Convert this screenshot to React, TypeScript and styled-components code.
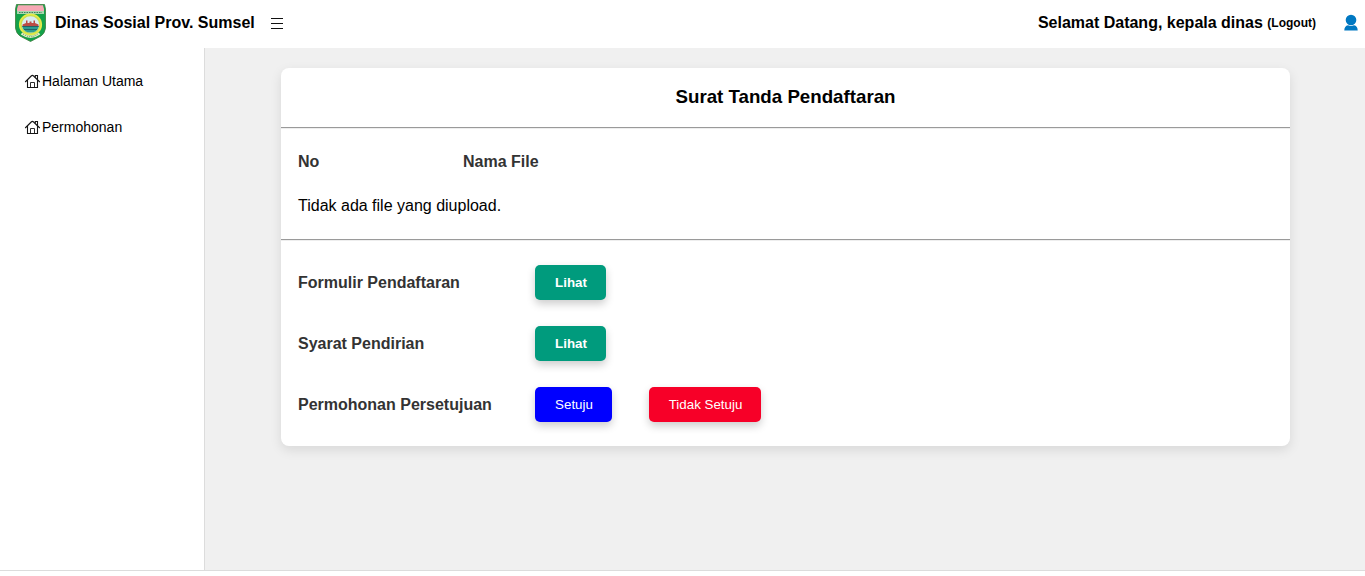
import React from "react";
import styled, { createGlobalStyle } from "styled-components";

const GlobalStyle = createGlobalStyle`
  * { box-sizing: border-box; }
  body {
    margin: 0;
    background: #fff;
    color: #000;
    font-family: "Liberation Sans", Arial, sans-serif;
    font-size: 16px;
    overflow: hidden;
  }
`;

const Page = styled.div`
  height: 571px;
  display: flex;
  flex-direction: column;
  border-bottom: 1px solid #dcdcdc;
`;

const Header = styled.header`
  height: 48px;
  flex: none;
  display: flex;
  align-items: flex-start;
  justify-content: space-between;
  padding: 0 6px 0 15px;
  background: #fff;
`;

const Group = styled.div`
  display: flex;
  align-items: flex-start;
`;

const Brand = styled.strong`
  margin: 14px 0 0 9px;
  width: 200px;
  line-height: 18px;
  white-space: nowrap;
`;

const MenuButton = styled.span`
  display: flex;
  margin: 18px 0 0 16px;
`;

const Welcome = styled.strong`
  margin-top: 14px;
  line-height: 18px;
  white-space: nowrap;
`;

const Logout = styled.strong`
  margin: 16px 28px 0 4.5px;
  font-size: 12px;
  line-height: 14px;
`;

const Avatar = styled.span`
  display: flex;
  margin-top: 14px;
`;

const Body = styled.div`
  flex: 1;
  display: flex;
`;

const Sidebar = styled.nav`
  width: 205px;
  flex: none;
  display: flex;
  flex-direction: column;
  gap: 30px;
  padding: 25px 24px;
  border-right: 1px solid #dcdcdc;
`;

const NavItem = styled.div`
  display: flex;
  align-items: center;
  gap: 1px;
  height: 16px;
  font-size: 14px;
  line-height: 16px;
`;

const Main = styled.main`
  flex: 1;
  padding: 20px 75px 0 76px;
  background: #f0f0f0;
`;

const Card = styled.section`
  height: 378px;
  background: #fff;
  border-radius: 8px;
  box-shadow: 0 4px 12px rgba(0, 0, 0, 0.1);
`;

const Title = styled.h1`
  margin: 0;
  height: 59px;
  font-size: 18.72px;
  line-height: 58px;
  text-align: center;
`;

const Rule = styled.div`
  height: 2px;
  border-top: 1px solid #9a9a9a;
  border-bottom: 1px solid #eee;
`;

const Files = styled.div`
  height: 110px;
  padding: 24px 17px 0;
  line-height: 18px;
`;

const Columns = styled.div`
  display: grid;
  grid-template-columns: 165px 1fr;
  margin-bottom: 26px;
  color: #333;
  font-weight: bold;
`;

const Actions = styled.div`
  display: flex;
  flex-direction: column;
  gap: 26px;
  padding: 24px 17px 0;
`;

const Row = styled.div`
  display: flex;
  align-items: center;
  height: 35px;
`;

const Label = styled.strong`
  width: 237px;
  color: #333;
`;

const Button = styled.button<{ $color: string; $bold?: boolean; $width: number }>`
  width: ${(p) => p.$width}px;
  height: 35px;
  margin-right: 37px;
  padding: 0 0 0 1px;
  border: 0;
  border-radius: 5px;
  background: ${(p) => p.$color};
  color: #fff;
  font-family: inherit;
  font-size: 13.333px;
  font-weight: ${(p) => (p.$bold ? "bold" : "normal")};
  box-shadow: 0 4px 8px rgba(0, 0, 0, 0.2);
`;

const Crest = () => (
  <svg width="31" height="42" viewBox="0 -4 31 42">
    <path d="M1.5 .5H29.5L30.5 5V24Q30 29 26 32L15.5 37.5L5 32Q1 29 .5 24V5Z" fill="#13a24a" stroke="#3d7a3c" strokeWidth=".8" />
    <path d="M2 5L3 1.2H28L29 5V7H2Z" fill="#f7a8b4" />
    <path d="M2 7H29V10H2Z" fill="#a9d7ae" />
    <path d="M4 8.5H27" stroke="#43805a" strokeDasharray="1.5 1" />
    <ellipse cx="15.5" cy="20.5" rx="10.8" ry="10.3" fill="#c9e04e" stroke="#e5ea4a" strokeWidth="1.6" />
    <ellipse cx="15.5" cy="20.5" rx="8.8" ry="8.2" fill="#d9ecef" />
    <path d="M7 22H24Q22.5 28.5 15.5 28.6Q8.5 28.5 7 22Z" fill="#2b9c92" />
    <path d="M7.5 20.5L11 19V16.5H12.5V19H14.5V17.5H16.5V19H18.5V16.5H20V19L23.5 20.5V22.5H7.5Z" fill="#bd4b45" />
    <path d="M7.5 22.5H23.5M9 25.5H22" stroke="#236264" />
    <path d="M6.5 29.5Q15.5 36 24.5 29.5" fill="none" stroke="#e0efc5" strokeWidth="2.5" />
    <path d="M8 30Q15.5 35.5 23 30" fill="none" stroke="#668d55" strokeWidth=".9" strokeDasharray="1.2 1" />
  </svg>
);

const House = () => (
  <svg width="17" height="16" viewBox="0 0 17 16" fill="none" stroke="#151515" strokeWidth="1.1">
    <path d="M1.2 9L7.2 3Q8.4 1.9 9.6 3L15.8 9" />
    <path d="M3.5 7V14.5H13.5V7" />
    <path d="M11.3 4.3V2.5H13.5V6.5" />
    <path d="M6.5 14.5V9.5H10.5V14.5" strokeWidth=".9" />
  </svg>
);

const App = () => (
  <>
    <GlobalStyle />
    <Page>
      <Header>
        <Group>
          <Crest />
          <Brand>Dinas Sosial Prov. Sumsel</Brand>
          <MenuButton>
            <svg width="12" height="12" viewBox="0 0 12 12" stroke="#111">
              <path d="M0 .5H12M0 5.5H12M0 10.5H12" />
            </svg>
          </MenuButton>
        </Group>
        <Group>
          <Welcome>Selamat Datang, kepala dinas</Welcome>
          <Logout>(Logout)</Logout>
          <Avatar>
            <svg width="15" height="17" viewBox="0 0 15 17" fill="#0078c2">
              <ellipse cx="7" cy="6" rx="5.3" ry="5.2" />
              <path d="M.3 16.5Q.3 12 4 11.3Q7 12.8 10 11.3Q13.7 12 13.7 16.5Z" />
            </svg>
          </Avatar>
        </Group>
      </Header>
      <Body>
        <Sidebar>
          <NavItem><House />Halaman Utama</NavItem>
          <NavItem><House />Permohonan</NavItem>
        </Sidebar>
        <Main>
          <Card>
            <Title>Surat Tanda Pendaftaran</Title>
            <Rule />
            <Files>
              <Columns><span>No</span><span>Nama File</span></Columns>
              <div>Tidak ada file yang diupload.</div>
            </Files>
            <Rule />
            <Actions>
              <Row>
                <Label>Formulir Pendaftaran</Label>
                <Button $color="#009b7d" $width={71} $bold>Lihat</Button>
              </Row>
              <Row>
                <Label>Syarat Pendirian</Label>
                <Button $color="#009b7d" $width={71} $bold>Lihat</Button>
              </Row>
              <Row>
                <Label>Permohonan Persetujuan</Label>
                <Button $color="#0000ff" $width={77}>Setuju</Button>
                <Button $color="#f70028" $width={112}>Tidak Setuju</Button>
              </Row>
            </Actions>
          </Card>
        </Main>
      </Body>
    </Page>
  </>
);

export default App;
